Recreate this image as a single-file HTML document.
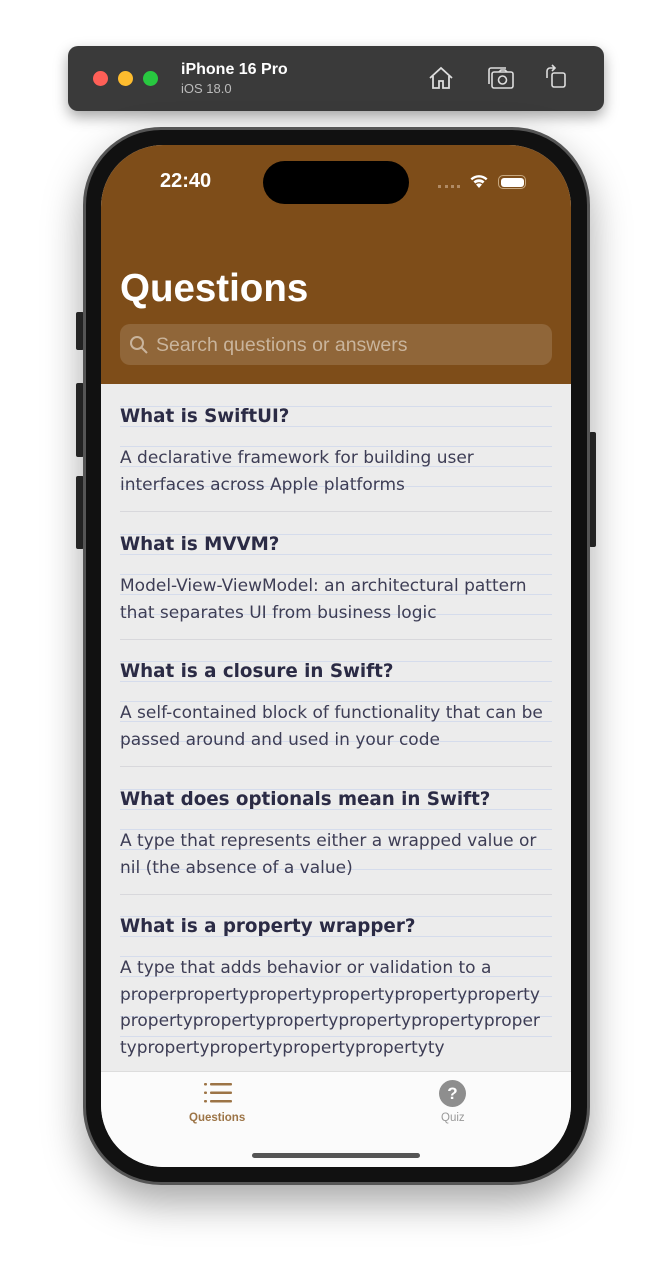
<!DOCTYPE html>
<html><head><meta charset="utf-8"><style>
*{margin:0;padding:0;box-sizing:border-box}
body{width:672px;height:1280px;background:#fff;position:relative;overflow:hidden;font-family:"Liberation Sans",sans-serif}
.bar{position:absolute;left:68px;top:46px;width:536px;height:65px;background:#3a3a3a;border-radius:10px;box-shadow:0 6px 14px rgba(0,0,0,.35)}
.dot{position:absolute;top:25px;width:15px;height:15px;border-radius:50%}
.btn{position:absolute;background:#2a2a2a;border-radius:2px}
.frame{position:absolute;left:83px;top:127px;width:507px;height:1058px;background:#111;border-radius:78px;border:3px solid #555;box-shadow:0 18px 40px rgba(0,0,0,.35)}
.screen{position:absolute;left:101px;top:145px;width:470px;height:1022px;border-radius:62px;overflow:hidden;background:#ececec}
.hdr{position:absolute;left:0;top:0;width:470px;height:239px;background:#7e4d19}
.row{position:absolute;left:19px;width:432px;height:128px;border-bottom:1px solid #d8d8dc;
background-image:repeating-linear-gradient(to bottom,transparent 0,transparent 22px,#d5dcec 22px,#d5dcec 23px,transparent 23px,transparent 20px);
background-image:repeating-linear-gradient(to bottom,transparent 0,transparent 2px,#d5dcec 2px,#d5dcec 3px,transparent 3px,transparent 20px);
background-position:0 20px;background-size:100% 86px;background-repeat:no-repeat}
.t{position:absolute;left:0;top:22px;font-family:"DejaVu Sans",sans-serif;font-weight:bold;font-size:18.3px;color:#2b2b45;white-space:nowrap}
.d{position:absolute;left:0;top:61px;font-family:"DejaVu Sans",sans-serif;font-size:17px;line-height:26.7px;color:#3d3d55;white-space:nowrap}
</style></head><body>
<div class="bar">
<div class="dot" style="left:25px;background:#fe5f57"></div>
<div class="dot" style="left:50px;background:#febc2e"></div>
<div class="dot" style="left:75px;background:#28c840"></div>
<div style="position:absolute;left:113px;top:15px;color:#fff;font-weight:bold;font-size:16px">iPhone 16 Pro</div>
<div style="position:absolute;left:113px;top:35px;color:#bbb;font-size:13px">iOS 18.0</div>
<svg style="position:absolute;left:360px;top:20px" width="26" height="24" viewBox="0 0 26 24" fill="none" stroke="#ddd" stroke-width="1.8"><path d="M2 12L13 2l11 10M5 10v12h6v-7h4v7h6V10"/></svg>
<svg style="position:absolute;left:419px;top:20px" width="28" height="24" viewBox="0 0 28 24" fill="none" stroke="#ddd" stroke-width="1.6"><rect x="5" y="6" width="21" height="16" rx="2"/><path d="M2 18V4a2 2 0 0 1 2-2h15"/><circle cx="15.5" cy="14" r="4"/><path d="M12 6l2-2h4l2 2"/></svg>
<svg style="position:absolute;left:476px;top:18px" width="24" height="26" viewBox="0 0 24 26" fill="none" stroke="#ddd" stroke-width="1.6"><rect x="8" y="9" width="13" height="14" rx="2"/><path d="M3 14V7a3 3 0 0 1 3-3h5M8 1l3 3-3 3"/></svg>
</div>
<div class="btn" style="left:76px;top:312px;width:8px;height:38px"></div>
<div class="btn" style="left:76px;top:383px;width:8px;height:74px"></div>
<div class="btn" style="left:76px;top:476px;width:8px;height:73px"></div>
<div class="btn" style="left:589px;top:432px;width:7px;height:115px"></div>
<div class="frame"></div>
<div class="screen">
<div class="hdr">
<div style="position:absolute;left:59px;top:25px;color:#fff;font-size:20px;font-weight:bold">22:40</div>
<div style="position:absolute;left:162px;top:16px;width:146px;height:43px;background:#000;border-radius:22px"></div>
<div style="position:absolute;left:337px;top:40px;width:22px;height:3px;border-top:3px dotted #b08a64"></div>
<svg style="position:absolute;left:368px;top:28px" width="20" height="15" viewBox="0 0 20 15"><path d="M10 15l-3-3.5a4.5 4.5 0 0 1 6 0z M4.5 8.5a8 8 0 0 1 11 0l-1.8 2a5.5 5.5 0 0 0-7.4 0z M1.5 5.5a12.5 12.5 0 0 1 17 0l-1.6 1.8a10 10 0 0 0-13.8 0z" fill="#fff"/></svg>
<div style="position:absolute;left:397px;top:30px;width:28px;height:14px;border:1.5px solid #c7a880;border-radius:5px;padding:1.5px"><div style="width:100%;height:100%;background:#fff;border-radius:3px"></div></div>
<div style="position:absolute;left:19px;top:122px;color:#fff;font-size:38.5px;font-weight:bold">Questions</div>
<div style="position:absolute;left:19px;top:179px;width:432px;height:41px;background:rgba(255,255,255,.14);border-radius:10px">
<svg style="position:absolute;left:9px;top:11px" width="20" height="20" viewBox="0 0 20 20" fill="none" stroke="#c9b49c" stroke-width="2"><circle cx="8" cy="8" r="6"/><path d="M12.5 12.5L18 18"/></svg>
<div style="position:absolute;left:36px;top:10px;color:#c9b49c;font-size:19.5px">Search questions or answers</div></div>
</div>
<div class="row" style="top:239px"><div class="t">What is SwiftUI?</div><div class="d">A declarative framework for building user<br>interfaces across Apple platforms</div></div>
<div class="row" style="top:367px"><div class="t">What is MVVM?</div><div class="d">Model-View-ViewModel: an architectural pattern<br>that separates UI from business logic</div></div>
<div class="row" style="top:494px"><div class="t">What is a closure in Swift?</div><div class="d">A self-contained block of functionality that can be<br>passed around and used in your code</div></div>
<div class="row" style="top:622px"><div class="t">What does optionals mean in Swift?</div><div class="d">A type that represents either a wrapped value or<br>nil (the absence of a value)</div></div>
<div class="row" style="top:749px;height:200px;border:none;background-size:100% 140px"><div class="t">What is a property wrapper?</div><div class="d">A type that adds behavior or validation to a<br>properpropertypropertypropertypropertyproperty<br>propertypropertypropertypropertypropertyproper<br>typropertypropertypropertypropertyty</div></div>
<div style="position:absolute;left:0;top:926px;width:470px;height:96px;background:#fbfbfb;border-top:1px solid #ddd">
<svg style="position:absolute;left:103px;top:11px" width="28" height="20" viewBox="0 0 28 20" fill="#9c7446"><rect x="0" y="0" width="3" height="2.5" rx="1"/><rect x="6" y="0" width="22" height="2.5" rx="1"/><rect x="0" y="8.5" width="3" height="2.5" rx="1"/><rect x="6" y="8.5" width="22" height="2.5" rx="1"/><rect x="0" y="17" width="3" height="2.5" rx="1"/><rect x="6" y="17" width="22" height="2.5" rx="1"/></svg>
<div style="position:absolute;left:88px;top:40px;color:#9c7446;font-size:11.5px;font-weight:bold">Questions</div>
<div style="position:absolute;left:338px;top:8px;width:27px;height:27px;border-radius:50%;background:#8e8e8e;color:#fff;font-weight:bold;font-size:17px;text-align:center;line-height:27px">?</div>
<div style="position:absolute;left:340px;top:40px;color:#999;font-size:11.5px">Quiz</div>
<div style="position:absolute;left:151px;top:81px;width:168px;height:5px;border-radius:3px;background:#555"></div>
</div>
</div>
</body></html>
